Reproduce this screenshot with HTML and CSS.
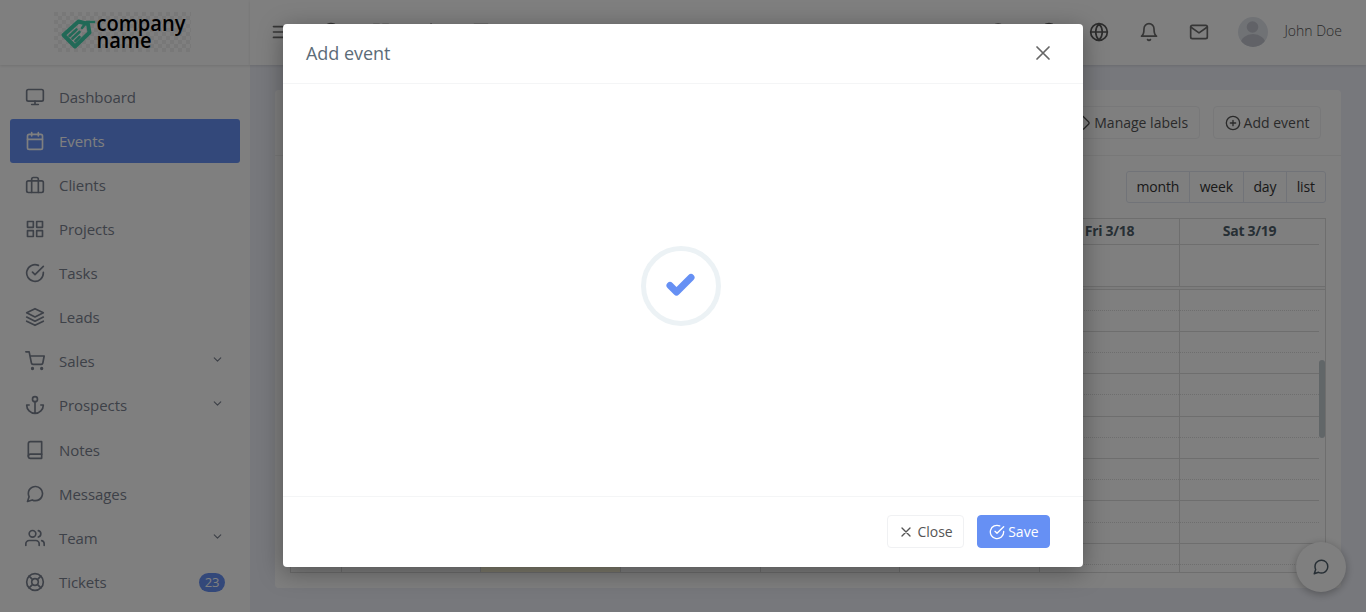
FILE: index.html
```html
<!DOCTYPE html>
<html lang="en">
<head>
<meta charset="utf-8">
<title>Events</title>
<link rel="stylesheet" href="styles.css">
</head>
<body>
<div class="app">
  <aside class="sidebar">
    <div class="brand">
      <svg class="logo" viewBox="0 0 137 40" width="137" height="40">
        <defs><pattern id="chk" width="8" height="8" patternUnits="userSpaceOnUse"><path fill="#f1f1f1" d="M0 0h4v4H0zM4 4h4v4H4z"/></pattern></defs>
        <rect width="137" height="40" fill="#fff"/><rect width="137" height="40" fill="url(#chk)"/>
        <path d="M24.500 9.500 9.500 23l11.500 11.500L35.500 20.500 34 12z" fill="none" stroke="#43d3ae" stroke-width="4" stroke-linejoin="round"/>
        <path d="m28 16 4.500-6H40M15.500 24l7-6.500M18.500 26.500l7-6.500M21.500 29l4-4" fill="none" stroke="#43d3ae" stroke-width="2.600" stroke-linecap="round"/>
        <text x="42.500" y="19" textLength="89" lengthAdjust="spacingAndGlyphs">company</text>
        <text x="42.500" y="35.500" textLength="55" lengthAdjust="spacingAndGlyphs">name</text>
      </svg>
    </div>
    <nav class="menu">
      <a class="item"><svg class="ic"><use href="#monitor"/></svg>Dashboard</a>
      <a class="item active"><svg class="ic"><use href="#calendar"/></svg>Events</a>
      <a class="item"><svg class="ic"><use href="#briefcase"/></svg>Clients</a>
      <a class="item"><svg class="ic"><use href="#grid"/></svg>Projects</a>
      <a class="item"><svg class="ic"><use href="#check-circle"/></svg>Tasks</a>
      <a class="item"><svg class="ic"><use href="#layers"/></svg>Leads</a>
      <a class="item"><svg class="ic"><use href="#cart"/></svg>Sales<svg class="chev"><use href="#chevron"/></svg></a>
      <a class="item"><svg class="ic"><use href="#anchor"/></svg>Prospects<svg class="chev"><use href="#chevron"/></svg></a>
      <a class="item gap"><svg class="ic"><use href="#book"/></svg>Notes</a>
      <a class="item"><svg class="ic"><use href="#message"/></svg>Messages</a>
      <a class="item"><svg class="ic"><use href="#users"/></svg>Team<svg class="chev"><use href="#chevron"/></svg></a>
      <a class="item"><svg class="ic"><use href="#lifebuoy"/></svg>Tickets<span class="badge">23</span></a>
    </nav>
  </aside>
  <div class="main">
    <header class="topbar">
      <div class="tools">
        <svg class="ic"><use href="#menu"/></svg>
        <svg class="ic"><use href="#check-circle"/></svg>
        <svg class="ic"><use href="#grid"/></svg>
        <svg class="ic"><use href="#star"/></svg>
        <svg class="ic"><use href="#monitor"/></svg>
      </div>
      <div class="tools right">
        <svg class="ic"><use href="#search"/></svg>
        <svg class="ic dark"><use href="#clock"/></svg>
        <svg class="ic dark"><use href="#globe"/></svg>
        <svg class="ic"><use href="#bell"/></svg>
        <svg class="ic"><use href="#mail"/></svg>
      </div>
      <div class="user">
        <svg class="avatar" viewBox="0 0 30 30"><defs><clipPath id="av"><circle cx="15" cy="15" r="15"/></clipPath></defs><g clip-path="url(#av)"><path fill="#e1e4eb" d="M0 0h30v30H0z"/><circle cx="14.500" cy="10" r="5.800" fill="#c2c5ce"/><ellipse cx="15" cy="27" rx="12.500" ry="10" fill="#c2c5ce"/></g></svg>
        <span class="name">John Doe</span>
      </div>
    </header>
    <section class="card">
      <div class="card-head">
        <span class="btn"><svg class="bi"><use href="#tag"/></svg>Manage labels</span>
        <span class="btn"><svg class="bi"><use href="#plus-circle"/></svg>Add event</span>
      </div>
      <div class="views"><span>month</span><span>week</span><span>day</span><span>list</span></div>
      <div class="calendar">
        <div class="days">
          <span></span><b>Sun 3/13</b><b>Mon 3/14</b><b>Tue 3/15</b><b>Wed 3/16</b><b>Thu 3/17</b><b>Fri 3/18</b><b>Sat 3/19</b>
        </div>
        <div class="days allday"><span></span><b></b><b></b><b></b><b></b><b></b><b></b><b></b></div>
        <div class="divider"></div>
        <div class="times">
          <div class="days cols"><span></span><b></b><b class="today"></b><b></b><b></b><b></b><b></b><b></b></div>
          <div class="slots"><i></i><i></i><i></i><i></i><i></i><i></i><i></i><i></i><i></i><i></i><i></i><i></i><i></i><i></i></div>
          <div class="thumb"></div>
        </div>
      </div>
    </section>
  </div>
</div>
<div class="fab"><svg class="bi"><use href="#message"/></svg></div>
<div class="backdrop"></div>
<div class="modal">
  <div class="modal-head"><h4>Add event</h4><svg class="x"><use href="#x"/></svg></div>
  <div class="modal-body">
    <div class="ring"><svg class="tick" viewBox="0 0 30 24" width="30" height="24"><path d="m5 12.500 6.500 6.500L26 4.500" fill="none" stroke="#6690f4" stroke-width="7" stroke-linecap="round" stroke-linejoin="round"/></svg></div>
  </div>
  <div class="modal-foot">
    <span class="btn close"><svg class="bi"><use href="#x"/></svg>Close</span>
    <span class="btn primary"><svg class="bi"><use href="#check-circle"/></svg>Save</span>
  </div>
</div>
<svg class="defs">
  <symbol id="monitor" viewBox="0 0 24 24"><rect x="2" y="3" width="20" height="14" rx="2"/><path d="M8 21h8M12 17v4"/></symbol>
  <symbol id="calendar" viewBox="0 0 24 24"><rect x="3" y="4" width="18" height="18" rx="2"/><path d="M16 2v4M8 2v4M3 10h18"/></symbol>
  <symbol id="briefcase" viewBox="0 0 24 24"><rect x="2" y="7" width="20" height="14" rx="2"/><path d="M16 21V5a2 2 0 0 0-2-2h-4a2 2 0 0 0-2 2v16"/></symbol>
  <symbol id="grid" viewBox="0 0 24 24"><path d="M3 3h7v7H3zM14 3h7v7h-7zM14 14h7v7h-7zM3 14h7v7H3z"/></symbol>
  <symbol id="check-circle" viewBox="0 0 24 24"><path d="M22 11.080V12a10 10 0 1 1-5.930-9.140M22 4 12 14.010l-3-3"/></symbol>
  <symbol id="layers" viewBox="0 0 24 24"><path d="M12 2 2 7l10 5 10-5zM2 17l10 5 10-5M2 12l10 5 10-5"/></symbol>
  <symbol id="cart" viewBox="0 0 24 24"><circle cx="9" cy="21" r="1"/><circle cx="20" cy="21" r="1"/><path d="M1 1h4l2.680 13.390a2 2 0 0 0 2 1.610h9.720a2 2 0 0 0 2-1.610L23 6H6"/></symbol>
  <symbol id="anchor" viewBox="0 0 24 24"><circle cx="12" cy="5" r="3"/><path d="M12 22V8M5 12H2a10 10 0 0 0 20 0h-3"/></symbol>
  <symbol id="book" viewBox="0 0 24 24"><path d="M4 19.500A2.500 2.500 0 0 1 6.500 17H20"/><path d="M6.500 2H20v20H6.500A2.500 2.500 0 0 1 4 19.500v-15A2.500 2.500 0 0 1 6.500 2z"/></symbol>
  <symbol id="message" viewBox="0 0 24 24"><path d="M21 11.500a8.380 8.380 0 0 1-.9 3.800 8.500 8.500 0 0 1-7.600 4.700 8.380 8.380 0 0 1-3.800-.9L3 21l1.900-5.700a8.380 8.380 0 0 1-.9-3.800 8.500 8.500 0 0 1 4.700-7.600 8.380 8.380 0 0 1 3.800-.9h.5a8.480 8.480 0 0 1 8 8z"/></symbol>
  <symbol id="users" viewBox="0 0 24 24"><path d="M17 21v-2a4 4 0 0 0-4-4H5a4 4 0 0 0-4 4v2"/><circle cx="9" cy="7" r="4"/><path d="M23 21v-2a4 4 0 0 0-3-3.870M16 3.130a4 4 0 0 1 0 7.750"/></symbol>
  <symbol id="lifebuoy" viewBox="0 0 24 24"><circle cx="12" cy="12" r="10"/><circle cx="12" cy="12" r="4"/><path d="m4.930 4.930 4.240 4.240M14.830 14.830l4.240 4.240M14.830 9.170l4.240-4.240M4.930 19.070l4.240-4.240"/></symbol>
  <symbol id="chevron" viewBox="0 0 24 24"><path d="m6 9 6 6 6-6"/></symbol>
  <symbol id="menu" viewBox="0 0 24 24"><path d="M3 12h18M3 5.500h18M3 18.500h18"/></symbol>
  <symbol id="star" viewBox="0 0 24 24"><path d="m12 2.500 3.090 6.260L22 9.770l-5 4.870 1.180 6.880L12 18.270l-6.180 3.250L7 14.640 2 9.770l6.910-1.010z"/></symbol>
  <symbol id="search" viewBox="0 0 24 24"><circle cx="11" cy="10.500" r="8"/><path d="m21 21-4.350-4.350"/></symbol>
  <symbol id="clock" viewBox="0 0 24 24"><circle cx="12" cy="12" r="10"/><path d="M12 6v6l4 2"/></symbol>
  <symbol id="globe" viewBox="0 0 24 24"><circle cx="12" cy="12" r="10"/><path d="M2 12h20M12 2a15.300 15.300 0 0 1 4 10 15.300 15.300 0 0 1-4 10 15.300 15.300 0 0 1-4-10 15.300 15.300 0 0 1 4-10z"/></symbol>
  <symbol id="bell" viewBox="0 0 24 24"><path d="M18 8A6 6 0 0 0 6 8c0 7-3 9-3 9h18s-3-2-3-9M13.730 21a2 2 0 0 1-3.460 0"/></symbol>
  <symbol id="mail" viewBox="0 0 24 24"><path d="M4 4h16a2 2 0 0 1 2 2v12a2 2 0 0 1-2 2H4a2 2 0 0 1-2-2V6a2 2 0 0 1 2-2z"/><path d="m22 6-10 7L2 6"/></symbol>
  <symbol id="tag" viewBox="0 0 24 24"><path d="m20.590 13.410-7.170 7.170a2 2 0 0 1-2.830 0L2 12V2h10l8.590 8.590a2 2 0 0 1 0 2.820zM7 7h.01"/></symbol>
  <symbol id="plus-circle" viewBox="0 0 24 24"><circle cx="12" cy="12" r="10"/><path d="M12 8v8M8 12h8"/></symbol>
  <symbol id="x" viewBox="0 0 24 24"><path d="M18 6 6 18M6 6l12 12"/></symbol>
</svg>
</body>
</html>
```
FILE: styles.css
```css
* { box-sizing: border-box; }
body { margin: 0; height: 612px; overflow: hidden; background: #eff1f9; font: 300 14px/20px "Open Sans", sans-serif; color: #4e5e6a; }
svg { fill: none; stroke: currentColor; stroke-width: 2; stroke-linecap: round; stroke-linejoin: round; flex: none; }
.defs { display: none; }
.app { display: flex; height: 612px; }
.sidebar { width: 250px; background: #fff; }
.brand { height: 65px; padding: 12px 0 0 54px; box-shadow: 0 1px 3px rgba(0,0,0,.12); }
.logo { display: block; stroke: none; overflow: visible; }
.logo text { font: 600 21px "Open Sans", sans-serif; fill: #000; }
.menu { padding: 10px 10px 0; }
.item { display: flex; align-items: center; height: 44px; padding: 0 15px; font-size: 15px; font-weight: 400; letter-spacing: -.06px; border-radius: 3px; color: #7b8290; }
.item.active { background: #6690f4; color: #fff; }
.gap { margin-top: 1px; }
.ic { width: 20px; height: 20px; }
.item .ic { margin-right: 14px; }
.chev { width: 13px; height: 13px; margin: -4px 1px 0 auto; stroke-width: 2.200; }
.badge { margin-left: auto; width: 26px; height: 19px; border-radius: 10px; background: #6690f4; color: #fff; font-size: 13px; line-height: 19px; text-align: center; }
.main { flex: 1; }
.topbar { display: flex; align-items: center; height: 65px; background: #fff; box-shadow: 0 1px 3px rgba(0,0,0,.12); padding: 0 24px 0 21px; color: #6c6c6c; }
.tools { display: flex; gap: 30px; padding-bottom: 1px; }
.right { margin-left: auto; }
.dark { color: #585858; }
.user { display: flex; align-items: center; gap: 16px; padding: 0 0 2px 29px; color: #555; }
.name { padding-bottom: 2px; }
.avatar { width: 30px; height: 30px; stroke: none; }
.card { margin: 25px 25px 0; height: 498px; background: #fff; border-radius: 4px; }
.card-head { display: flex; justify-content: flex-end; gap: 13px; height: 66px; padding: 16px 20px 0; border-bottom: 1px solid #f0f0f0; }
.btn { display: flex; align-items: center; height: 33px; padding: 0 10.500px 0 11px; border: 1px solid #f0f1f3; border-radius: 4px; color: #555; background: #fff; white-space: nowrap; font-weight: 400; letter-spacing: 0; }
.bi { width: 16px; height: 16px; margin-right: 3px; }
.views { display: flex; justify-content: flex-end; padding: 15px 15px 0; }
.views span { height: 32px; padding: 0 10.200px 0 9.200px; border: 1px solid #e2e7f1; margin-left: -1px; line-height: 30px; color: #333; font-weight: 400; letter-spacing: -.15px; }
.views span:first-child { border-radius: 3px 0 0 3px; }
.views span:last-child { border-radius: 0 3px 3px 0; }
.calendar { margin: 15px 15px 0; border: 1px solid #ddd; height: 355px; overflow: hidden; }
.days { display: grid; grid-template-columns: 50px 139px 140px 140px 139px 140px 140px 1fr; height: 26px; margin-right: 6px; border-bottom: 1px solid #ddd; }
.days b { border-left: 1px solid #ddd; text-align: center; line-height: 24px; color: #4e5e6a; font-weight: 700; letter-spacing: -.3px; }
.allday { height: 41px; border-bottom: 0; }
.divider { height: 4px; border: solid #ddd; border-width: 1px 0; background: #f8f8f8; }
.times { display: grid; height: 284px; position: relative; }
.cols, .slots { grid-area: 1 / 1; }
.cols { height: 284px; border: 0; }
.today { background: #fcf6d9; }
.slots { margin: -.5px 6px 0 0; }
.slots i { display: block; height: 21.200px; border-bottom: 1px dotted #ddd; }
.slots i:nth-child(even) { border-bottom-style: solid; }
.thumb { position: absolute; right: 0; top: 70px; width: 6px; height: 78px; border-radius: 3px; background: #c3ccd1; }
.fab { position: absolute; left: 1296px; top: 542px; width: 50px; height: 50px; border-radius: 50%; background: #fff; box-shadow: 0 2px 8px rgba(0,0,0,.3); display: flex; align-items: center; justify-content: center; }
.fab .bi { width: 18px; height: 18px; margin: 0; }
.backdrop { position: absolute; inset: 0; background: rgba(0,0,0,.5); }
.modal { position: absolute; left: 283px; top: 24px; width: 800px; height: 543px; display: flex; flex-direction: column; border-radius: 4px; background: #fff; box-shadow: 0 5px 25px rgba(0,0,0,.35); }
.modal-head { display: flex; align-items: center; justify-content: space-between; height: 60px; padding: 0 28px 1px 23px; border-bottom: 1px solid #f4f5f6; }
h4 { margin: 0; font-size: 18px; font-weight: 400; letter-spacing: -.05px; color: #5c6c78; }
.x { width: 24px; height: 24px; stroke-width: 1.700; color: #666; }
.modal-body { flex: 1; display: flex; align-items: center; justify-content: center; padding: 0 4px 8px 0; }
.ring { width: 80px; height: 80px; border: 5px solid #ecf2f5; border-radius: 50%; display: flex; align-items: center; justify-content: center; }
.tick { margin: 0 2px 2px 0; }
.modal-foot { display: flex; justify-content: flex-end; gap: 13px; height: 71px; padding: 18px 33px 0; border-top: 1px solid #f4f5f6; }
.modal-foot .close { padding: 0 10.500px 0 10px; }
.modal-foot .primary { background: #6690f4; border-color: #6690f4; color: #fff; }
```
